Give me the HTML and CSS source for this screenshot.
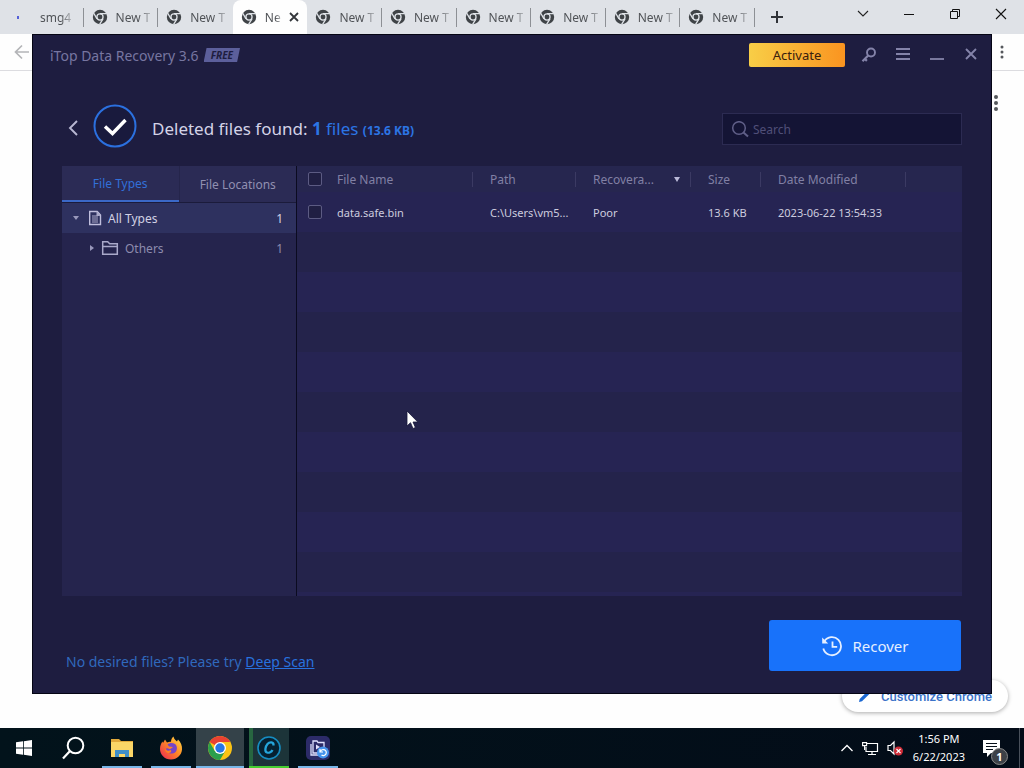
FILE: index.html
```html
<!DOCTYPE html>
<html lang="en">
<head>
<meta charset="utf-8">
<title>iTop Data Recovery</title>
<link rel="stylesheet" href="styles.css">
</head>
<body>
<svg class="defs" aria-hidden="true">
  <symbol id="mono-chrome" viewBox="0 0 16 16">
    <circle cx="8" cy="8" r="7.2" fill="#3f4347"/>
    <circle cx="8" cy="8" r="3.7" fill="#dfe3e8"/>
    <circle cx="8" cy="8" r="2.4" fill="#3f4347"/>
    <path d="M8 4.6h6.8M5 9.8L1.6 4M11 9.8L7.6 15.4" stroke="#dfe3e8" stroke-width="1.3"/>
  </symbol>
</svg>
<div class="desktop">
  <header class="tabstrip">
    <nav class="tabs" aria-label="Browser tabs">
      <button class="tab first"><span class="loading"></span><span class="tab-text wide">smg4</span></button>
      <button class="tab"><svg class="fav"><use href="#mono-chrome"/></svg><span class="tab-text">New T</span></button>
      <button class="tab"><svg class="fav"><use href="#mono-chrome"/></svg><span class="tab-text">New T</span></button>
      <button class="tab active"><svg class="fav"><use href="#mono-chrome"/></svg><span class="tab-text">Ne</span><svg class="tab-close" viewBox="0 0 10 10"><path d="M1 1l8 8M9 1L1 9" stroke="#33363a" stroke-width="1.8"/></svg></button>
      <button class="tab"><svg class="fav"><use href="#mono-chrome"/></svg><span class="tab-text">New T</span></button>
      <button class="tab"><svg class="fav"><use href="#mono-chrome"/></svg><span class="tab-text">New T</span></button>
      <button class="tab"><svg class="fav"><use href="#mono-chrome"/></svg><span class="tab-text">New T</span></button>
      <button class="tab"><svg class="fav"><use href="#mono-chrome"/></svg><span class="tab-text">New T</span></button>
      <button class="tab"><svg class="fav"><use href="#mono-chrome"/></svg><span class="tab-text">New T</span></button>
      <button class="tab"><svg class="fav"><use href="#mono-chrome"/></svg><span class="tab-text">New T</span></button>
    </nav>
    <button class="new-tab" aria-label="New tab"><svg width="12" height="12" viewBox="0 0 12 12"><path d="M6 0v12M0 6h12" stroke="#303338" stroke-width="2"/></svg></button>
    <div class="win-controls">
      <button aria-label="Search tabs"><svg width="12" height="12" viewBox="0 0 12 12"><path d="M1 3l5 5 5-5" fill="none" stroke="#222" stroke-width="1.1"/></svg></button>
      <button aria-label="Minimize"><svg width="12" height="12" viewBox="0 0 12 12"><path d="M1 6.500h10" stroke="#111" stroke-width="1"/></svg></button>
      <button aria-label="Restore"><svg width="12" height="12" viewBox="0 0 12 12"><path d="M1.500 3.500h7v7h-7zM3.500 3.500v-2h7v7h-2" fill="none" stroke="#111"/></svg></button>
      <button aria-label="Close"><svg width="12" height="12" viewBox="0 0 12 12"><path d="M1 1l10 10M11 1L1 11" stroke="#111" stroke-width="1.1"/></svg></button>
    </div>
  </header>
  <div class="toolbar">
    <button aria-label="Back"><svg width="16" height="16" viewBox="0 0 16 16"><path d="M15 8H2M8 1.500L1.500 8 8 14.500" fill="none" stroke="#b4b5b8" stroke-width="1.7"/></svg></button>
    <button aria-label="Browser menu"><svg width="4" height="14" viewBox="0 0 4 14"><g fill="#55585c"><circle cx="2" cy="2" r="1.500"/><circle cx="2" cy="7" r="1.500"/><circle cx="2" cy="12" r="1.500"/></g></svg></button>
  </div>
  <div class="page">
    <button class="page-menu" aria-label="Page menu"><svg width="4" height="18" viewBox="0 0 4 18"><g fill="#55585c"><circle cx="2" cy="3" r="2"/><circle cx="2" cy="9" r="2"/><circle cx="2" cy="15" r="2"/></g></svg></button>
    <button class="customize"><svg width="14" height="14" viewBox="0 0 14 14"><path d="M1 13l.7-3L9.500 2.200l2.400 2.400L4 12.300z" fill="#1a67d2"/></svg>Customize Chrome</button>
  </div>

  <main class="window">
    <div class="titlebar">
      <span class="title">iTop Data Recovery 3.6</span><span class="free"><b>FREE</b></span>
      <button class="activate">Activate</button>
      <div class="title-icons">
        <button aria-label="License key"><svg width="16" height="16" viewBox="0 0 16 16"><circle cx="10" cy="5.500" r="4" fill="none" stroke="#8483a9" stroke-width="1.9"/><path d="M7.200 8.400L1.500 14.200M3.600 11.600l2.300 2.300" stroke="#8483a9" stroke-width="2.200"/></svg></button>
        <button aria-label="Menu"><svg width="16" height="16" viewBox="0 0 16 16"><path d="M1 2h14M1 7h14M1 12h14" stroke="#8483a9" stroke-width="1.800"/></svg></button>
        <button aria-label="Minimize"><svg width="16" height="16" viewBox="0 0 16 16"><path d="M1 12h14" stroke="#8483a9" stroke-width="1.800"/></svg></button>
        <button aria-label="Close"><svg width="16" height="16" viewBox="0 0 16 16"><path d="M3 2l10 10M13 2L3 12" stroke="#8483a9" stroke-width="1.900"/></svg></button>
      </div>
    </div>
    <div class="heading">
      <button class="back" aria-label="Go back"><svg width="12" height="18" viewBox="0 0 12 18"><path d="M10 2L3 9l7 7" fill="none" stroke="#b9b8d2" stroke-width="1.900"/></svg></button>
      <svg class="badge" width="44" height="44" viewBox="0 0 44 44"><circle cx="22" cy="22" r="20.500" fill="#191a3d" stroke="#2b70df" stroke-width="2"/><path d="M12 22.500l7.500 7L32.500 16" fill="none" stroke="#fff" stroke-width="3.400"/></svg>
      <h1>Deleted files found: <em><b>1</b> files <b class="small">(13.6 KB)</b></em></h1>
      <label class="search"><svg width="18" height="18" viewBox="0 0 18 18"><circle cx="8" cy="8" r="6.300" fill="none" stroke="#605f88" stroke-width="1.500"/><path d="M12.500 12.500l4.500 4" stroke="#605f88" stroke-width="2"/></svg><input type="search" placeholder="Search" aria-label="Search"></label>
    </div>
    <div class="panels">
      <aside class="side">
        <div class="side-tabs"><button class="on">File Types</button><button>File Locations</button></div>
        <button class="node selected"><svg class="caret" viewBox="0 0 6 6"><path d="M0 1h6L3 5z" fill="#9998bb"/></svg><svg width="14" height="16" viewBox="0 0 14 16"><path d="M1.700 1.500h7.500l3.300 3.500v9.500H1.700z" fill="none" stroke="#c0bfdd" stroke-width="1.400"/><path d="M4 6h6M4 8h6M4 10h6M4 12h6" stroke="#aaa9ca"/><path d="M8.500 1v5h4" fill="#aaa9ca"/></svg><span>All Types</span><span class="count">1</span></button>
        <button class="node child"><svg class="caret" viewBox="0 0 6 6"><path d="M1 0v6l4-3z" fill="#9998bb"/></svg><svg width="18" height="16" viewBox="0 0 18 16"><path d="M1.700 14.300V1.700h5l2 2h7.600v10.600zM2 6.500h14" fill="none" stroke="#aaa9ca" stroke-width="1.500"/></svg><span>Others</span><span class="count">1</span></button>
      </aside>
      <section class="files">
        <table>
          <colgroup><col class="c-check"><col class="c-name"><col class="c-path"><col class="c-rec"><col class="c-size"><col class="c-date"><col></colgroup>
          <thead><tr><th><input type="checkbox" aria-label="Select all"></th><th class="sep name">File Name</th><th class="sep">Path</th><th class="sep"><span class="sort">Recovera...<svg width="6" height="5" viewBox="0 0 6 5"><path d="M0 0h6L3 5z" fill="#bab9d8"/></svg></span></th><th class="sep">Size</th><th class="sep">Date Modified</th><th></th></tr></thead>
          <tbody><tr><td><input type="checkbox" aria-label="Select data.safe.bin"></td><td class="name">data.safe.bin</td><td>C:\Users\vm5...</td><td>Poor</td><td>13.6 KB</td><td>2023-06-22 13:54:33</td><td></td></tr></tbody>
        </table>
      </section>
    </div>
    <div class="footer">
      <p>No desired files? Please try <a href="#">Deep Scan</a></p>
      <button class="recover"><svg width="22" height="22" viewBox="0 0 22 22"><path d="M3.300 6.500A9 9 0 1 1 2.300 13.500" fill="none" stroke="#e5efff" stroke-width="1.800"/><path d="M1.200 2.500v6h6z" fill="#e5efff"/><path d="M11.500 6.500v5.300h4.700" fill="none" stroke="#e5efff" stroke-width="1.800"/></svg>Recover</button>
    </div>
  </main>

  <footer class="taskbar">
    <div class="apps">
      <button aria-label="Start"><svg width="16" height="16" viewBox="0 0 16 16"><path d="M0 2.300l7-1v6.300H0zM7.800 1.200L16 0v7.600H7.800zM0 8.400h7v6.300l-7-1zM7.800 8.400H16V16l-8.200-1.200z" fill="#fff"/></svg></button>
      <button aria-label="Search"><svg width="24" height="24" viewBox="0 0 24 24"><circle cx="14.500" cy="9.500" r="7.800" fill="none" stroke="#fff" stroke-width="2"/><path d="M9 15l-7 7.500" stroke="#fff" stroke-width="2.200"/></svg></button>
      <button class="open" aria-label="File Explorer"><svg width="24" height="24" viewBox="0 0 24 24"><path d="M1 3h8l2 2h12v16H1z" fill="#e2a93b"/><path d="M1 6h22v15H1z" fill="#fbd667"/><path d="M5 21v-7h14v7h-4v-3H9v3z" fill="#3f8fc9"/></svg></button>
      <button class="open" aria-label="Firefox"><svg width="24" height="24" viewBox="0 0 24 24"><defs><linearGradient id="ff" x1="1" y1="0" x2="0" y2="1"><stop offset="0" stop-color="#ffe14a"/><stop offset=".45" stop-color="#ff8b25"/><stop offset="1" stop-color="#ed2056"/></linearGradient></defs><path d="M12 23.500C5.500 23.500 1 18.500 1 13c0-3 1-5.500 2.500-7.500L4 7l2-3.500 2 3c1-.5 2.500-.8 4-.8 0-2 1-4 2.500-5.200.5 3 2 3.500 3.500 5L19 3.500c3 3 4.300 6 4 10-.4 5.600-5 10-11 10z" fill="url(#ff)"/><path d="M8.500 8.500c2-2 5.500-2 7.500-.5 2.500 2 2.500 6 .5 8s-6 2-8 0c-1-1-1.500-2.500-1-4l3.500 1.200 3-2.200-4-.5z" fill="#7545c7"/><path d="M6 13c2 2.500 4 1.500 6 1 1 2-1 3.500-3 3-1.500-.5-3-2-3-4z" fill="#ff8124"/></svg></button>
      <button class="open current" aria-label="Chrome"><svg width="24" height="24" viewBox="0 0 24 24"><circle cx="12" cy="12" r="12" fill="#fbc315"/><path d="M12 12L1.610 6A12 12 0 0 1 22.390 6z" fill="#e84132"/><path d="M1.610 6A12 12 0 0 0 12 24l5.200-9L12 12 6.800 15z" fill="#2b9f4c"/><path d="M12 6h10.390L17.200 15z" fill="#fbc315"/><circle cx="12" cy="12" r="6" fill="#fff"/><circle cx="12" cy="12" r="4.700" fill="#2876e5"/></svg></button>
      <button class="open progress" aria-label="C application"><svg width="24" height="24" viewBox="0 0 24 24"><circle cx="12" cy="12" r="11" fill="#062131" stroke="#168dc2" stroke-width="1.600"/><path d="M16.500 9.500c.4-4-4-3.700-6-1.500-2.200 2.500-3.200 7.500-.5 8.500 2 .7 4.500-.5 5.500-2.500" fill="none" stroke="#25a6dc" stroke-width="2.300"/></svg></button>
      <button class="open" aria-label="iTop Data Recovery"><svg width="24" height="24" viewBox="0 0 24 24"><rect width="24" height="24" rx="5" fill="#2c2b68"/><path d="M5 8v11h8M7 5h4l1 1.500h6V17H7z" fill="none" stroke="#e1e2ff" stroke-width="1.300"/><path d="M10 8.500v5l4-2.500z" fill="#e1e2ff"/><circle cx="17" cy="16.500" r="6" fill="#4694ed"/><path d="M14.500 15.500a3 3 0 1 1 1 3.500M14 13v3h3" fill="none" stroke="#fff" stroke-width="1.200"/></svg></button>
    </div>
    <div class="tray">
      <svg width="14" height="10" viewBox="0 0 14 10"><path d="M1.500 8L7 2.500 12.500 8" fill="none" stroke="#fff" stroke-width="1.300"/></svg>
      <svg width="17" height="16" viewBox="0 0 17 16"><path d="M5 3.500h10.500v8H4V7M10 11.500v3M6 14.500h8" fill="none" stroke="#fff" stroke-width="1.200"/><path d="M.6 2.600h4v3h-4zM2.600 5.600V10" fill="none" stroke="#fff" stroke-width="1.100"/></svg>
      <svg width="16" height="16" viewBox="0 0 16 16"><path d="M1 5.500h2.500L7 2v12l-3.500-3.500H1z" fill="none" stroke="#fff" stroke-width="1.200"/><circle cx="11.500" cy="11" r="4.500" fill="#cf2c37"/><path d="M9.500 9l4 4m0-4l-4 4" stroke="#fff" stroke-width="1.100"/></svg>
      <time>1:56 PM<br>6/22/2023</time>
      <span class="notify"><svg width="17" height="17" viewBox="0 0 17 17"><path d="M0 0h17v13H8l-4 4v-4H0z" fill="#fff"/><path d="M3 3.500h11M3 6.500h11M3 9.500h7" stroke="#08101a"/></svg><b>1</b></span>
    </div>
  </footer>
  <svg class="cursor" width="13" height="20" viewBox="0 0 13 20"><path d="M1 1v15l3.500-3.300L7 18.500l2.400-1L7 12h4.800z" fill="#fff" stroke="#16163b" stroke-width=".8"/></svg>
</div>
</body>
</html>
```
FILE: styles.css
```css
* { box-sizing: border-box; }
body { margin: 0; font-family: "Noto Sans", "Open Sans", sans-serif; font-size: 12px; background: #fefefe; }
button { font: inherit; color: inherit; background: none; border: 0; padding: 0; }
svg { display: block; flex: none; }
.defs { position: absolute; width: 0; height: 0; }
.desktop { position: relative; min-height: 100vh; display: flex; flex-direction: column; }

/* browser */
.tabstrip { display: flex; height: 34px; background: #dfe2e7; }
.tabs { display: flex; flex: 0 1 755px; min-width: 0; padding-left: 9px; }
.tab { flex: 1 1 0; min-width: 0; display: flex; align-items: center; padding: 0 4px 0 8px; color: #505357;
  background: linear-gradient(#8d9095, #8d9095) no-repeat right center / 1px 19px; }
.tab:has(+ .active) { background: none; }
.fav { width: 16px; height: 16px; }
.tab-text { margin-left: 8px; white-space: nowrap; text-align: left; -webkit-mask-image: linear-gradient(90deg, #000 65%, #0005); mask-image: linear-gradient(90deg, #000 65%, #0005); }
.tab-text.wide { margin-left: 21px; }
.loading { width: 2px; height: 3px; background: #5560d8; }
.tab.active { background: #fefefe; border-radius: 8px 8px 0 0; }
.tab-close { width: 10px; height: 10px; margin-left: 8px; }
.new-tab { display: flex; align-items: center; padding: 0 16px; }
.win-controls { display: flex; margin-left: auto; height: 28px; }
.win-controls button { width: 46px; display: grid; place-items: center; }
.toolbar { display: flex; justify-content: space-between; align-items: center; height: 37px; padding: 0 20px 0 14px; border-bottom: 1px solid #dcdce0; }
.page { flex: 1; display: flex; flex-direction: column; align-items: flex-end; justify-content: space-between; padding: 23px 16px 16px; }
.page-menu { margin-right: 10px; }
.customize { display: flex; align-items: center; gap: 9px; height: 32px; padding: 0 16px; border-radius: 16px; background: #fff; box-shadow: 0 1px 4px #aaa; color: #3b72c8; font: 500 13px Roboto, sans-serif; }

/* application window */
.window { position: absolute; inset: 34px 32px 74px; display: flex; flex-direction: column; border: 1px solid #050514; background: #1e1d40; padding: 0 29px 22px; color: #9a99b7; }
.titlebar { display: flex; align-items: center; height: 40px; margin: 0 -17px 0 -12px; }
.title { font-size: 14px; color: #7776a1; }
.free { margin-left: 5px; padding: 0 7px; background: #5c5f9b; color: #1e1d40; font-size: 10px; line-height: 14px; clip-path: polygon(8% 0, 100% 0, 92% 100%, 0 100%); font-style: italic; }
.activate { margin-left: auto; width: 96px; height: 24px; border-radius: 2px; background: linear-gradient(90deg, #f8ce47, #fa9420); color: #38200e; font-size: 13px; }
.title-icons { display: flex; gap: 18px; margin: 0 0 0 16px; }
.title-icons button { width: 16px; }
.heading { display: flex; align-items: center; padding: 29px 0 18px; }
.back { margin: 4px 0 0 5px; }
.badge { margin-left: 14px; }
h1 { margin: 8px 0 0 15px; font-size: 17px; line-height: 24px; font-weight: 400; color: #d4d3e7; }
h1 em { font-style: normal; color: #2c75e5; }
h1 .small { font-size: 12px; }
.search { display: flex; align-items: center; width: 240px; height: 32px; margin: 6px 0 0 auto; padding: 0 8px; gap: 4px; border: 1px solid #2c2b52; background: #141435; }
.search input { flex: 1; min-width: 0; border: 0; padding: 0; background: none; outline: 0; font: inherit; color: #a9a8cc; }
.search input::placeholder { color: #504f78; }
.panels { flex: 1; display: flex; background: #25244d; }
.side { flex: none; width: 235px; border-right: 1px solid #0b0b20; }
.side-tabs { display: flex; height: 37px; background: #2b2b55; border-bottom: 1px solid #1b1b3b; }
.side-tabs button { flex: 1; border-left: 1px solid #25254b; color: #9190b1; }
.side-tabs .on { color: #3270d9; border-left: 0; border-bottom: 2px solid #3b68c7; }
.node { display: flex; align-items: center; width: 100%; height: 30px; padding: 0 13px 0 11px; color: #8d8cae; }
.node.selected { background: #2e315f; color: #d2d1e4; }
.node .caret { width: 6px; height: 6px; margin-right: 9px; }
.node span { margin-left: 6px; }
.node.child { padding-left: 27px; }
.node.child .caret { margin-right: 6px; }
.node .count { margin-left: auto; }
.files { flex: 1; min-width: 0; background: linear-gradient(#26264f, #26264f) no-repeat 0 0 / 100% 26px, repeating-linear-gradient(#262453 0 40px, #24234b 40px 80px) 0 26px; }
table { width: 100%; table-layout: fixed; border-collapse: collapse; }
.c-check { width: 31px; } .c-name { width: 145px; } .c-path { width: 103px; } .c-rec { width: 115px; } .c-size { width: 70px; } .c-date { width: 145px; }
th, td { padding: 0 0 0 17px; text-align: left; font-weight: 400; white-space: nowrap; }
th { height: 26px; color: #8180a4; }
td { height: 40px; color: #cdccdf; font-size: 11px; }
th:first-child, td:first-child { padding-left: 11px; }
.name { padding-left: 9px; }
.sep { background: linear-gradient(#3b3a63, #3b3a63) no-repeat right center / 1px 15px; }
.sort { display: flex; align-items: center; justify-content: space-between; padding-right: 11px; }
input[type="checkbox"] { appearance: none; display: block; width: 14px; height: 14px; margin: 0; border: 1px solid #5c5b83; border-radius: 2px; background: #201f43; }
.footer { display: flex; justify-content: space-between; align-items: flex-end; padding-top: 24px; }
.footer p { margin: 0 0 0 4px; font-size: 14px; line-height: 18px; color: #3069bd; }
.footer a { color: #2872df; }
.recover { display: flex; align-items: center; justify-content: center; gap: 9px; width: 192px; height: 51px; margin-right: 1px; border-radius: 3px; background: #1872fa; color: #e5efff; font-size: 15px; }

/* taskbar */
.taskbar { display: flex; justify-content: space-between; height: 40px; background: linear-gradient(90deg, #02131b, #030c18); color: #fff; }
.apps { display: flex; gap: 1px; }
.apps button { width: 48px; display: grid; place-items: center; }
.apps .open { background: linear-gradient(#78b6e8, #78b6e8) no-repeat center bottom / 40px 2px; }
.apps .current { background: linear-gradient(#78b6e8, #78b6e8) no-repeat center bottom / 48px 2px, #344249; }
.apps .progress { background: linear-gradient(#46cf31, #46cf31) no-repeat center bottom / 40px 2px, linear-gradient(90deg, #276640 4px, #1c3439 4px) no-repeat center / 40px 100%; }
.tray { display: flex; align-items: center; gap: 8px; margin-right: 4px; padding-right: 14px; border-right: 1px solid #49505b; }
.tray time { text-align: center; line-height: 18px; font-size: 11px; margin: 0 10px 0 2px; }
.notify { position: relative; padding-right: 5px; }
.notify b { position: absolute; right: -3px; bottom: -8px; width: 17px; height: 17px; border: 1px solid #888; border-radius: 50%; background: #3d4147; font-size: 11px; line-height: 15px; text-align: center; }
.cursor { position: absolute; left: 406px; top: 410px; }
```
